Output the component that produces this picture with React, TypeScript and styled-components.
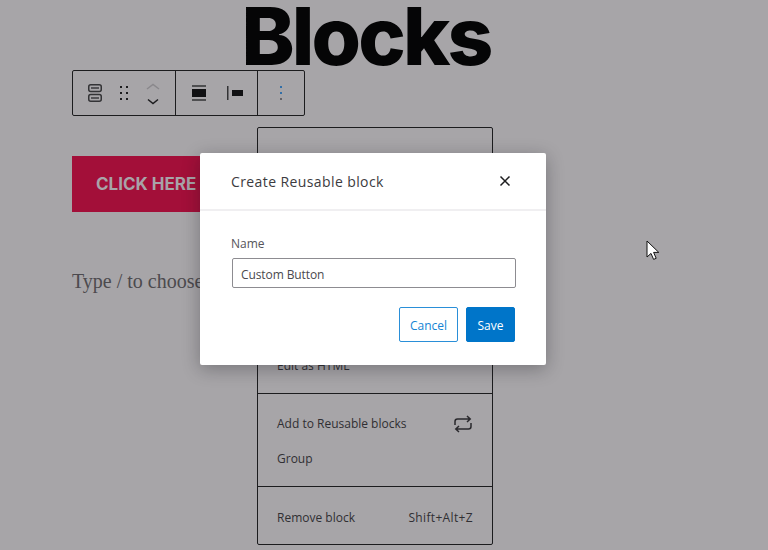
import React from 'react'
import styled, { createGlobalStyle } from 'styled-components'

const GlobalStyle = createGlobalStyle`
  html, body {
    margin: 0;
    padding: 0;
    height: 100%;
    overflow: hidden;
  }
  body {
    font-family: "Open Sans", "Noto Sans", sans-serif;
  }
`

const Page = styled.div`
  position: relative;
  width: 768px;
  height: 550px;
  overflow: hidden;
  background: #a7a5a8;
`

const Editor = styled.main`
  display: flex;
  flex-direction: column;
  align-items: flex-start;
  padding: 0 72px;
`

const Heading = styled.h1`
  align-self: center;
  margin: 0 36px 0 0;
  height: 70px;
  font-family: Inter, "Liberation Sans", sans-serif;
  font-size: 80px;
  font-weight: 800;
  line-height: 72px;
  letter-spacing: -2.9px;
  color: #050506;
`

const Toolbar = styled.div`
  display: flex;
  height: 44px;
  border: 1px solid #1c1c1e;
  border-radius: 2px;
`

const ToolGroup = styled.div<{ $width: number; $gap: number }>`
  display: flex;
  align-items: center;
  justify-content: center;
  gap: ${p => p.$gap}px;
  box-sizing: border-box;
  width: ${p => p.$width}px;
  & + & {
    border-left: 1px solid #1c1c1e;
  }
`

const CtaButton = styled.div`
  box-sizing: border-box;
  width: 150px;
  height: 56px;
  margin-top: 40px;
  padding-left: 24px;
  font-family: Inter, "Liberation Sans", sans-serif;
  font-size: 17px;
  font-weight: 700;
  line-height: 56px;
  white-space: nowrap;
  color: #a8a3a8;
  background: #a30f39;
`

const Placeholder = styled.p`
  margin: 56px 0 0;
  font-family: "Liberation Serif", serif;
  font-size: 20px;
  line-height: 26px;
  white-space: nowrap;
  color: #4c4a4e;
`

const Menu = styled.div`
  position: absolute;
  left: 257px;
  top: 127px;
  display: flex;
  flex-direction: column;
  box-sizing: border-box;
  width: 236px;
  height: 418px;
  border: 1px solid #1c1c1e;
  border-radius: 2px;
  font-size: 12px;
  color: #302f33;
`

const MenuSection = styled.div<{ $padding: string; $grow?: boolean }>`
  display: flex;
  flex-direction: column;
  justify-content: flex-end;
  flex: ${p => (p.$grow ? 1 : 'none')};
  padding: ${p => p.$padding};
  & + & {
    border-top: 1px solid #1c1c1e;
  }
`

const MenuItem = styled.div`
  display: flex;
  align-items: center;
  justify-content: space-between;
  height: 35px;
`

const Shortcut = styled.span`
  letter-spacing: 0.35px;
`

const RepeatIcon = styled.svg`
  margin-right: -2px;
`

const Modal = styled.div`
  position: absolute;
  left: 200px;
  top: 153px;
  box-sizing: border-box;
  width: 346px;
  height: 212px;
  background: #fff;
  border-radius: 2px;
  box-shadow: 0 4px 18px rgba(20, 20, 25, 0.32);
`

const ModalHeader = styled.header`
  display: flex;
  align-items: center;
  justify-content: space-between;
  box-sizing: border-box;
  height: 58px;
  padding: 0 31px;
  border-bottom: 2px solid #f0eff1;
`

const ModalTitle = styled.h2`
  margin: 0;
  font-size: 14px;
  font-weight: 500;
  letter-spacing: 0.4px;
  color: #3c3b40;
`

const ModalBody = styled.form`
  display: flex;
  flex-direction: column;
  padding: 24px 30px 0 32px;
`

const NameLabel = styled.label`
  margin-left: -1px;
  font-size: 12px;
  line-height: 18px;
  color: #55545a;
`

const NameInput = styled.input`
  box-sizing: border-box;
  width: 100%;
  height: 30px;
  margin-top: 5px;
  padding: 2px 8px 0;
  border: 1px solid #8d8c91;
  border-radius: 2px;
  outline: none;
  font-family: inherit;
  font-size: 12px;
  letter-spacing: -0.1px;
  color: #4a494e;
`

const Actions = styled.div`
  display: flex;
  justify-content: flex-end;
  gap: 8px;
  margin-top: 19px;
  padding-right: 1px;
`

const ActionButton = styled.button<{ $primary?: boolean }>`
  height: 35px;
  width: ${p => (p.$primary ? '49px' : '59px')};
  padding: 1px 0 0;
  border: 1px solid ${p => (p.$primary ? '#0075c9' : '#2a8fd8')};
  border-radius: 2px;
  font-family: inherit;
  font-size: 12px;
  color: ${p => (p.$primary ? '#fff' : '#1484d4')};
  background: ${p => (p.$primary ? '#0075c9' : '#fff')};
`

const Cursor = styled.svg`
  position: absolute;
  left: 646px;
  top: 240px;
`

const Icon = ({ children }: { children: React.ReactNode }) => (
  <svg width="24" height="24" viewBox="0 0 24 24" fill="none">
    {children}
  </svg>
)

function App() {
  return (
    <Page>
      <GlobalStyle />
      <Editor>
        <Heading>Blocks</Heading>
        <Toolbar>
          <ToolGroup $width={102} $gap={5}>
            <Icon>
              <rect x="5.75" y="3.75" width="12.5" height="6.75" rx="2" stroke="#333336" strokeWidth="1.5" />
              <rect x="5.75" y="13.5" width="12.5" height="6.75" rx="2" stroke="#333336" strokeWidth="1.5" />
              <path d="M8 7.1h8M8 16.9h8" stroke="#555458" strokeWidth="2" />
            </Icon>
            <Icon>
              <g fill="#1c1c1e">
                <rect x="8" y="5" width="2" height="2" />
                <rect x="14" y="5" width="2" height="2" />
                <rect x="8" y="11" width="2" height="2" />
                <rect x="14" y="11" width="2" height="2" />
                <rect x="8" y="17" width="2" height="2" />
                <rect x="14" y="17" width="2" height="2" />
              </g>
            </Icon>
            <svg width="24" height="36" viewBox="0 0 24 36" fill="none">
              <path d="M6 14 12 9.5l6 4.5" stroke="#8a888c" strokeWidth="1.5" />
              <path d="M7 24.5 12 28.5l5-4" stroke="#1c1c1e" strokeWidth="1.5" />
            </svg>
          </ToolGroup>
          <ToolGroup $width={82} $gap={12}>
            <Icon>
              <path d="M5 5h14M5 19h14" stroke="#333335" strokeWidth="1.5" />
              <rect x="5" y="8" width="14" height="8" fill="#111113" />
            </Icon>
            <Icon>
              <path d="M4.75 5v14" stroke="#333335" strokeWidth="1.5" />
              <rect x="9" y="9" width="11" height="6" fill="#111113" />
            </Icon>
          </ToolGroup>
          <ToolGroup $width={47} $gap={0}>
            <Icon>
              <circle cx="12" cy="6" r="1" fill="#0b5ea8" />
              <circle cx="12" cy="12" r="1" fill="#0b5ea8" />
              <circle cx="12" cy="18" r="1" fill="#4d4d52" />
            </Icon>
          </ToolGroup>
        </Toolbar>
        <CtaButton>CLICK HERE</CtaButton>
        <Placeholder>Type / to choose a block</Placeholder>
      </Editor>

      <Menu>
        <MenuSection $grow $padding="0 19px 10px">
          <MenuItem>Edit as HTML</MenuItem>
        </MenuSection>
        <MenuSection $padding="12px 19px 10px">
          <MenuItem>
            Add to Reusable blocks
            <RepeatIcon width="24" height="24" viewBox="0 0 24 24" fill="none" stroke="#2a292d" strokeWidth="1.5">
              <path d="M4 13V9.5A2.5 2.5 0 0 1 6.5 7H19M16 4l3.2 3L16 10" />
              <path d="M20 11v3.5a2.5 2.5 0 0 1-2.5 2.5H5M8 14l-3.2 3L8 20" />
            </RepeatIcon>
          </MenuItem>
          <MenuItem>Group</MenuItem>
        </MenuSection>
        <MenuSection $padding="13px 19px 9px">
          <MenuItem>
            Remove block
            <Shortcut>Shift+Alt+Z</Shortcut>
          </MenuItem>
        </MenuSection>
      </Menu>

      <Modal>
        <ModalHeader>
          <ModalTitle>Create Reusable block</ModalTitle>
          <svg width="20" height="20" viewBox="0 0 20 20" fill="none" stroke="#1e1e20" strokeWidth="1.5">
            <path d="M5.5 5.5l9 9M14.5 5.5l-9 9" />
          </svg>
        </ModalHeader>
        <ModalBody>
          <NameLabel htmlFor="block-name">Name</NameLabel>
          <NameInput id="block-name" defaultValue="Custom Button" />
          <Actions>
            <ActionButton type="button">Cancel</ActionButton>
            <ActionButton type="button" $primary>
              Save
            </ActionButton>
          </Actions>
        </ModalBody>
      </Modal>

      <Cursor width="14" height="21" viewBox="0 0 14 21">
        <path d="M1 1v16l4-3.6 2.6 6 2.6-1.1-2.6-5.9h5.2z" fill="#fff" stroke="#111" strokeWidth="1" />
      </Cursor>
    </Page>
  )
}

export default App
